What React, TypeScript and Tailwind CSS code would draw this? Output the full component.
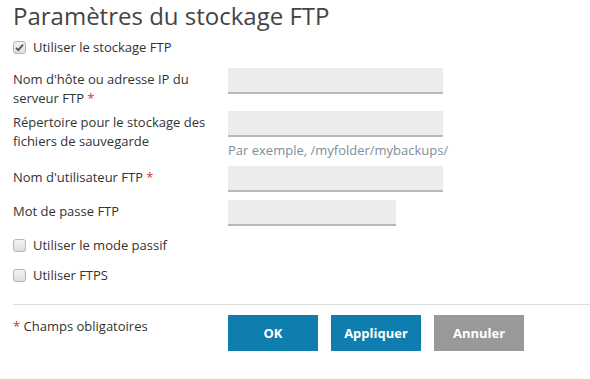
import { useState } from 'react'

const font = { fontFamily: '"Open Sans", "Liberation Sans", sans-serif' }

function Req() {
  return <span className="text-[#d0332b]">*</span>
}

function Field({ width = 'w-[215px]' }: { width?: string }) {
  return (
    <input
      type="text"
      className={`${width} h-[26px] bg-[#ececec] border-0 border-b-2 border-[#b3b9bd] outline-none px-2 text-[13px]`}
    />
  )
}

function Check({ label, defaultChecked = false }: { label: string; defaultChecked?: boolean }) {
  const [checked, setChecked] = useState(defaultChecked)
  return (
    <label className="flex items-center gap-[7px] h-[19px] cursor-pointer">
      <span className="relative w-[13px] h-[13px]">
        <input
          type="checkbox"
          checked={checked}
          onChange={(e) => setChecked(e.target.checked)}
          className="appearance-none block w-[13px] h-[13px] m-0 rounded-[3px] border border-[#b5b5b5] bg-gradient-to-b from-[#f4f4f4] to-[#dedede]"
        />
        {checked && (
          <svg viewBox="0 0 13 13" className="absolute inset-0 w-[13px] h-[13px] pointer-events-none">
            <path d="M3 6.8 L5.3 9.2 L10 3.6" fill="none" stroke="#555" strokeWidth="1.8" />
          </svg>
        )}
      </span>
      <span>{label}</span>
    </label>
  )
}

export default function App() {
  return (
    <div style={font} className="w-[590px] h-[379px] bg-white text-[#333] text-[13px] leading-[19px] overflow-hidden">
      <div className="pl-[13px]">
        {/* Title */}
        <h1 className="text-[24px] leading-[30px] pt-[1px] text-[#444] font-normal">
          Paramètres du stockage FTP
        </h1>

        <div className="mt-[7px]">
          <Check label="Utiliser le stockage FTP" defaultChecked />
        </div>

        {/* Host */}
        <div className="flex mt-[11px]">
          <div className="w-[215px] pt-[2px]">
            Nom d'hôte ou adresse IP du serveur FTP <Req />
          </div>
          <Field />
        </div>

        {/* Directory */}
        <div className="flex mt-[3px]">
          <div className="w-[215px] pt-[2px]">
            Répertoire pour le stockage des fichiers de sauvegarde
          </div>
          <div className="flex flex-col">
            <Field />
            <span className="text-[#7f8e98] mt-[4px]">Par exemple, /myfolder/mybackups/</span>
          </div>
        </div>

        {/* User */}
        <div className="flex mt-[6px]">
          <div className="w-[215px] pt-[2px]">
            Nom d'utilisateur FTP <Req />
          </div>
          <Field />
        </div>

        {/* Password */}
        <div className="flex mt-[8px]">
          <div className="w-[215px] pt-[2px]">Mot de passe FTP</div>
          <Field width="w-[168px]" />
        </div>

        <div className="mt-[10px] flex flex-col gap-[11px]">
          <Check label="Utiliser le mode passif" />
          <Check label="Utiliser FTPS" />
        </div>

        <div className="mt-[19px] border-t border-[#dcdcdc]" />

        {/* Footer */}
        <div className="flex mt-[10px]">
          <div className="w-[215px] pt-[2px]">
            <Req /> Champs obligatoires
          </div>
          <div className="flex gap-[13px]">
            <button className="w-[90px] h-[36px] bg-[#0f7eae] text-white font-bold">OK</button>
            <button className="w-[90px] h-[36px] bg-[#0f7eae] text-white font-bold">Appliquer</button>
            <button className="w-[90px] h-[36px] bg-[#999999] text-white font-bold">Annuler</button>
          </div>
        </div>
      </div>
    </div>
  )
}
